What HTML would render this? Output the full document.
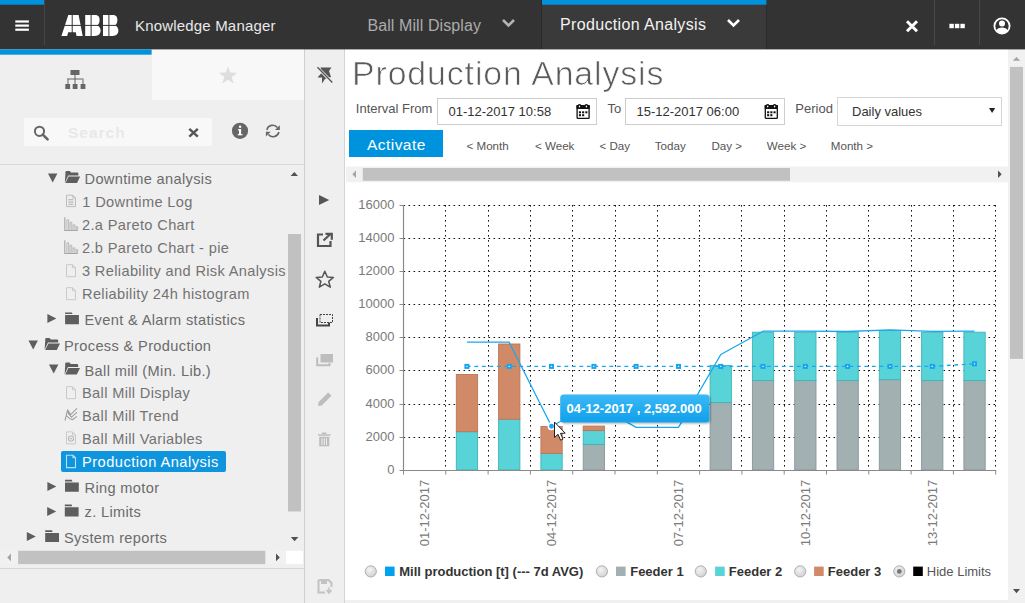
<!DOCTYPE html>
<html><head><meta charset="utf-8">
<style>
html,body{margin:0;padding:0}
body{width:1025px;height:603px;overflow:hidden;position:relative;background:#fff;font-family:"Liberation Sans",sans-serif}
.a{position:absolute}
.t{position:absolute;white-space:nowrap;line-height:1}
svg{position:absolute;overflow:visible}
</style></head><body>

<div id="left" class="a" style="left:0;top:49px;width:304px;height:554px;background:#efefef"></div>
<div class="a" style="left:152px;top:49px;width:152px;height:51px;background:#f8f8f8"></div>
<div class="a" style="left:304px;top:49px;width:1px;height:554px;background:#cfcfcf"></div>
<div class="a" style="left:305px;top:49px;width:39px;height:554px;background:#efefef"></div>
<div class="a" style="left:344px;top:49px;width:1px;height:554px;background:#d4d4d4"></div>
<div class="a" style="left:1008px;top:49px;width:17px;height:554px;background:#f1f1f1"></div>
<!-- HEADER -->
<svg style="left:0;top:0" width="1025" height="56"><rect x="0" y="0" width="1025" height="49.4" fill="#333"/><rect x="0" y="0" width="44.5" height="4.7" fill="#0093dd"/></svg>
<div class="a" style="left:44px;top:0;width:1px;height:45px;background:#454545"></div>
<svg style="left:0;top:0" width="44" height="49"><g fill="#fff"><rect x="15.3" y="20.4" width="13.6" height="2.2"/><rect x="15.3" y="24.5" width="13.6" height="2.2"/><rect x="15.3" y="28.6" width="13.6" height="2.2"/></g></svg>
<!-- ABB logo -->
<svg style="left:0;top:0" width="130" height="49">
  <g fill="#fff">
    <path d="M68.3 15 L78.6 15 L82.7 36 L76.5 36 L75.8 32.3 L68.2 32.3 L67.2 36 L61.4 36 Z"/>
    <path d="M85.2 15 L95 15 C98.8 15 99.6 17.6 99.6 20 C99.6 22.8 98.4 24.6 97.4 25.4 C99.4 26.2 100.6 28.2 100.6 30.6 C100.6 34.2 98.2 36 94.8 36 L85.2 36 Z"/>
    <path d="M103 15 L112.8 15 C116.6 15 117.4 17.6 117.4 20 C117.4 22.8 116.2 24.6 115.2 25.4 C117.2 26.2 118.4 28.2 118.4 30.6 C118.4 34.2 116 36 112.6 36 L103 36 Z"/>
  </g>
  <g fill="#333">
    <rect x="60" y="24.9" width="60" height="1"/>
    <rect x="71.7" y="14" width="1" height="23"/>
    <rect x="90.6" y="14" width="1" height="23"/>
    <rect x="108.4" y="14" width="1" height="23"/>
  </g>
</svg>
<div class="t" style="left:135px;top:18.4px;font-size:15px;color:#e8e8e8;letter-spacing:0.18px">Knowledge Manager</div>
<div class="t" style="left:367.4px;top:17.6px;font-size:16px;color:#ababab;letter-spacing:0.1px">Ball Mill Display</div>
<svg style="left:500px;top:17px" width="18" height="12"><path d="M3 3 L8.5 8.5 L14 3" fill="none" stroke="#b5b5b5" stroke-width="2.6"/></svg>
<div class="a" style="left:541px;top:0;width:226px;height:49px;background:#3a3a3a;border-left:1px solid #2a2a2a;border-right:1px solid #2a2a2a;box-sizing:border-box"></div>
<svg style="left:0;top:0" width="1025" height="10"><rect x="542" y="0" width="224.5" height="4.7" fill="#0093dd"/></svg>
<div class="t" style="left:560px;top:16.5px;font-size:16px;color:#f2f2f2;letter-spacing:0.35px">Production Analysis</div>
<svg style="left:725px;top:17px" width="18" height="12"><path d="M3 3 L8.5 8.5 L14 3" fill="none" stroke="#fff" stroke-width="2.6"/></svg>
<svg style="left:900px;top:14px" width="24" height="24"><path d="M7 7.2 L17 17.2 M17 7.2 L7 17.2" stroke="#fff" stroke-width="3"/></svg>
<div class="a" style="left:934px;top:0;width:1px;height:45px;background:#474747"></div>
<div class="a" style="left:979px;top:0;width:1px;height:45px;background:#474747"></div>
<svg style="left:0;top:0" width="1025" height="49"><g fill="#fff"><rect x="949.4" y="23.8" width="4.4" height="4.4"/><rect x="954.9" y="23.8" width="4.4" height="4.4"/><rect x="960.4" y="23.8" width="4.4" height="4.4"/></g></svg>
<svg style="left:990px;top:14px" width="24" height="24">
  <circle cx="12" cy="12" r="7.6" fill="none" stroke="#fff" stroke-width="1.8"/>
  <circle cx="12" cy="9.4" r="3" fill="#fff"/>
  <path d="M6.2 16.8 C7.5 14.2 9.5 13.6 12 13.6 C14.5 13.6 16.5 14.2 17.8 16.8 C16.4 18.6 14.3 19.6 12 19.6 C9.7 19.6 7.6 18.6 6.2 16.8 Z" fill="#fff"/>
</svg>

<!-- LEFT PANEL -->
<svg style="left:0;top:0" width="304" height="60"><rect x="0" y="49.4" width="151.6" height="5.3" fill="#0093dd"/></svg>


<!-- tab icons -->
<svg style="left:0;top:0" width="304" height="100">
  <g fill="#666">
    <rect x="70.5" y="70" width="9" height="5"/>
    <rect x="74.5" y="75" width="1" height="4"/>
    <rect x="67.5" y="78.5" width="15" height="1"/>
    <rect x="67.5" y="78.5" width="1" height="6"/>
    <rect x="74.5" y="78.5" width="1" height="6"/>
    <rect x="82.5" y="78.5" width="1" height="6"/>
    <rect x="65.3" y="84" width="4.8" height="5"/>
    <rect x="72.7" y="84" width="4.8" height="5"/>
    <rect x="80.6" y="84" width="4.8" height="5"/>
  </g>
  <path d="M228 66.6 L230.3 72.4 L237.2 72.8 L231.8 76.9 L233.7 83.6 L228 79.7 L222.3 83.6 L224.2 76.9 L218.8 72.8 L225.7 72.4 Z" fill="#dedede"/>
</svg>
<!-- search box -->
<div class="a" style="left:24px;top:118px;width:188px;height:28px;background:#f8f8f8"></div>
<svg style="left:0;top:100px" width="304" height="60">
  <circle cx="39.5" cy="31.3" r="4.6" fill="none" stroke="#666" stroke-width="2"/>
  <path d="M42.8 34.6 L47.6 39.4" stroke="#666" stroke-width="2.6" stroke-linecap="round"/>
  <path d="M189.3 28.8 L197.8 36.6 M197.8 28.8 L189.3 36.6" stroke="#555" stroke-width="2.4"/>
  <circle cx="240" cy="30.8" r="8.1" fill="#666"/>
  <rect x="239" y="29.2" width="2.1" height="5.8" fill="#fff"/>
  <rect x="237.9" y="29.2" width="3.2" height="1.2" fill="#fff"/>
  <rect x="237.7" y="34.1" width="4.8" height="1.2" fill="#fff"/>
  <circle cx="240.1" cy="26.8" r="1.2" fill="#fff"/>
  <path d="M266.9 30 A5.9 5.9 0 0 1 277.4 27.6" fill="none" stroke="#666" stroke-width="1.6"/>
  <path d="M278.9 32 A5.9 5.9 0 0 1 268.5 34.4" fill="none" stroke="#666" stroke-width="1.6"/>
  <path d="M279.8 25.2 L279.8 30 L275 30 Z" fill="#666"/>
  <path d="M265.9 36.6 L265.9 31.8 L270.7 31.8 Z" fill="#666"/>
</svg>
<div class="t" style="left:68px;top:124.6px;font-size:15.5px;font-weight:bold;color:#e8e8e8;letter-spacing:1px">Search</div>
<div class="a" style="left:0;top:164px;width:304px;height:1px;background:#d8d8d8"></div>

<!-- tree -->
<div id="tree" style="position:absolute;left:0;top:0;width:304px;height:550px;overflow:hidden;color:#6b6b6b;font-size:14.6px;letter-spacing:0.35px">
  <div class="t" style="left:84.5px;top:172.15px">Downtime analysis</div>
  <div class="t" style="left:82.3px;top:195.25px;color:#737373">1 Downtime Log</div>
  <div class="t" style="left:82px;top:218.25px;color:#737373">2.a Pareto Chart</div>
  <div class="t" style="left:82px;top:241.25px;color:#737373">2.b Pareto Chart - pie</div>
  <div class="t" style="left:82px;top:264.25px;color:#737373">3 Reliability and Risk Analysis</div>
  <div class="t" style="left:82px;top:287.25px;color:#737373">Reliability 24h histogram</div>
  <div class="t" style="left:84.5px;top:313.15px">Event &amp; Alarm statistics</div>
  <div class="t" style="left:64px;top:338.65px">Process &amp; Production</div>
  <div class="t" style="left:84.5px;top:363.85px">Ball mill (Min. Lib.)</div>
  <div class="t" style="left:82px;top:386.35px;color:#737373">Ball Mill Display</div>
  <div class="t" style="left:82px;top:408.95px;color:#737373">Ball Mill Trend</div>
  <div class="t" style="left:82px;top:432.05px;color:#737373">Ball Mill Variables</div>
  <div class="a" style="left:61px;top:451px;width:165px;height:21px;background:#0f95dd;border-radius:2px"></div>
  <div class="t" style="left:82px;top:455.05px;color:#fff;letter-spacing:0.5px">Production Analysis</div>
  <div class="t" style="left:84.5px;top:480.65px">Ring motor</div>
  <div class="t" style="left:84.5px;top:505.15px">z. Limits</div>
  <div class="t" style="left:64px;top:531.15px">System reports</div>
  <svg style="left:0;top:0" width="304" height="550">
    <defs>
      <path id="fo" d="M0.6 3.2 L0.6 1.2 Q0.6 0 1.8 0 L5 0 L6.2 1.6 L12.4 1.6 Q13.6 1.6 13.6 2.8 L13.6 4.6 L3.4 4.6 L0 11.8 Z M3.8 5.6 L15.4 5.6 L12.2 12 L0.6 12 Z"/>
      <path id="fc" d="M0.4 0 L7.2 0 L7.8 1.7 L0.4 1.7 Z M0.4 2.7 L14.2 2.7 L14.2 11.9 L0.4 11.9 Z"/>
      <path id="tr" d="M0 0 L9.4 0 L4.7 9 Z"/>
      <path id="tl" d="M0 0 L9 4.5 L0 9 Z"/>
      <path id="doc" d="M0.5 0.5 L6.5 0.5 L9.5 3.5 L9.5 12.5 L0.5 12.5 Z M6.5 0.5 L6.5 3.5 L9.5 3.5" fill="none" stroke="#c9c9c9" stroke-width="1"/>
    </defs>
    <g fill="#5e5e5e">
      <use href="#tr" x="48" y="173.5"/>
      <use href="#fo" x="64.8" y="171"/>
      <use href="#tl" x="47.4" y="314"/>
      <use href="#fc" x="64.7" y="312.4"/>
      <use href="#tr" x="28.5" y="340.5"/>
      <use href="#fo" x="44.6" y="338"/>
      <use href="#tr" x="49" y="364.5"/>
      <use href="#fo" x="64.6" y="362.5"/>
      <use href="#tl" x="47.4" y="482"/>
      <use href="#fc" x="64.6" y="479.8"/>
      <use href="#tl" x="47.2" y="507"/>
      <use href="#fc" x="64.4" y="504.6"/>
      <use href="#tl" x="26.8" y="532"/>
      <use href="#fc" x="44.8" y="530.2"/>
    </g>
    <!-- item icons -->
    <g>
      <path d="M66.5 195.2 L72.8 195.2 L75.5 197.9 L75.5 206.6 L66.5 206.6 Z M72.8 195.2 V197.9 H75.5" fill="none" stroke="#bcbcbc"/>
      <path d="M68.3 199.8 H73.5 M68.3 202 H73.5 M68.3 204.2 H73.5" stroke="#b0b0b0" stroke-width="1.1"/>
      <path d="M64.8 217.3 V230.5 H77.8" fill="none" stroke="#a5a5a5" stroke-width="1.1"/><path d="M66.9 229.9 V219.9 H68.7 V229.9 M70 229.9 V222.3 H71.8 V229.9 M73.1 229.9 V224.9 H74.9 V229.9 M76.2 229.9 V226.70000000000002 H77.6 V229.9" fill="none" stroke="#b0b0b0" stroke-width="0.9"/>
      <path d="M64.8 240.3 V253.5 H77.8" fill="none" stroke="#a5a5a5" stroke-width="1.1"/><path d="M66.9 252.9 V242.9 H68.7 V252.9 M70 252.9 V245.3 H71.8 V252.9 M73.1 252.9 V247.9 H74.9 V252.9 M76.2 252.9 V249.70000000000002 H77.6 V252.9" fill="none" stroke="#b0b0b0" stroke-width="0.9"/>
      <use href="#doc" x="66" y="264.2"/>
      <use href="#doc" x="66" y="287.2"/>
      <use href="#doc" x="66" y="386.2"/>
      <path d="M65 420.5 L67.6 409.8 L70.6 414.6 L77 408.4 M67.6 409.8 L68.6 413.8 L71.6 417.2 L77 412.2 M66.2 415.6 L69.6 418.4 L72.4 419.8 L77 416.4" fill="none" stroke="#a0a0a0" stroke-width="1.1" stroke-linejoin="round"/>
      <use href="#doc" x="66" y="431.4"/>
      <circle cx="71" cy="438.6" r="2.6" fill="none" stroke="#b8b8b8" stroke-width="1.1"/><circle cx="71" cy="438.6" r="0.9" fill="#b8b8b8"/>
      <path d="M66.5 455.2 L73 455.2 L75.5 457.7 L75.5 467.6 L66.5 467.6 Z M73 455.2 V457.7 H75.5" fill="none" stroke="#b5e0f6" stroke-width="1.1"/>
    </g>
    <!-- v scrollbar -->
    <path d="M290.6 176.1 L294.3 172 L298 176.1 Z" fill="#505050"/>
    <rect x="288" y="234" width="13" height="277.5" fill="#c1c1c1"/>
    <path d="M290.8 537 L294.6 541.2 L298.4 537 Z" fill="#505050"/>
  </svg>
</div>
<!-- h scrollbar -->
<svg style="left:0;top:0" width="304" height="603">
  <rect x="0" y="550.8" width="286" height="13.3" fill="#f1f1f1"/>
  <rect x="18.1" y="550.8" width="247.2" height="13.3" fill="#c1c1c1"/>
  <path d="M11 553.6 L7.2 557.4 L11 561.2 Z" fill="#a3a3a3"/>
  <path d="M276 553.6 L279.8 557.4 L276 561.2 Z" fill="#505050"/>
  <rect x="286" y="550.8" width="17" height="13.3" fill="#fff"/>
  <rect x="0" y="568" width="304" height="1" fill="#d6d6d6"/>
</svg>


<!-- TOOLBAR -->
<svg style="left:300px;top:0" width="45" height="603">
  <!-- unpin -->
  <g fill="#555">
    <path d="M20.5 67.5 L31.5 67.5 L29 71 L31 77 L25 79 L22 83.5 L22 77.5 L17.5 77.5 L21.5 73 Z"/>
  </g>
  <path d="M17 67 L32.6 82.8" stroke="#efefef" stroke-width="3"/>
  <path d="M17.5 67.3 L32.3 82.5" stroke="#555" stroke-width="1.3"/>
  <!-- play -->
  <path d="M19 195 L29.2 200 L19 205 Z" fill="#555"/>
  <!-- external -->
  <path d="M23 234.5 H18 V246 H30.5 V241" fill="none" stroke="#555" stroke-width="2.2"/>
  <path d="M23.5 240.5 L31 233.5 M25.5 233.8 H31.8 V239.8" fill="none" stroke="#555" stroke-width="2.2"/>
  <!-- star outline -->
  <path d="M24.8 271.2 L27.3 277 L33.4 277.4 L28.7 281.3 L30.3 287.2 L24.8 283.9 L19.3 287.2 L20.9 281.3 L16.2 277.4 L22.3 277 Z" fill="none" stroke="#555" stroke-width="1.5" stroke-linejoin="round"/>
  <!-- select -->
  <rect x="20" y="314.5" width="12.5" height="8" fill="none" stroke="#444" stroke-width="1" stroke-dasharray="2,1"/>
  <path d="M17 318 V325.5 H29 V322.5" fill="none" stroke="#444" stroke-width="2"/>
  <!-- copy disabled -->
  <rect x="20.5" y="354" width="12.5" height="8.5" fill="#bdbdbd"/>
  <path d="M17.2 357.5 V365.2 H29.5 V363" fill="none" stroke="#bdbdbd" stroke-width="2"/>
  <!-- pencil -->
  <path d="M18 406 L18.6 402 L28.2 392.6 L31.4 395.8 L21.8 405.4 Z" fill="#bdbdbd"/>
  <!-- trash -->
  <path d="M18 435 H30.5 M22 433.2 H26.5" stroke="#bdbdbd" stroke-width="1.6"/>
  <path d="M19.2 436.8 H29.3 V446.3 H19.2 Z" fill="#bdbdbd"/>
  <path d="M22 438.2 V445 M24.25 438.2 V445 M26.5 438.2 V445" stroke="#efefef" stroke-width="1"/>
  <!-- save -->
  <path d="M18.5 580 H28.5 L31.5 583 V587 M18.5 580 V592.5 H25" fill="none" stroke="#c2c2c2" stroke-width="2"/>
  <rect x="21" y="580" width="6" height="4" fill="#c2c2c2"/>
  <path d="M29 587.5 V592.5 M26.5 590 L29 593 L31.5 590" fill="none" stroke="#c2c2c2" stroke-width="1.6"/>
</svg>

<!-- MAIN -->
<div class="a" style="left:345px;top:600px;width:663px;height:3px;background:#f0f0f0"></div>
<svg style="left:1000px;top:0" width="25" height="603">
  <path d="M12.8 60.7 L16.5 57 L20.2 60.7 Z" fill="#a3a3a3"/>
  <rect x="10" y="66.9" width="13" height="292" fill="#c1c1c1"/>
  <path d="M13 589 L16.5 593.2 L20 589 Z" fill="#505050"/>
</svg>

<div class="t" style="left:351.8px;top:57.6px;font-size:32.5px;color:#5a5a5a;letter-spacing:0.88px;-webkit-text-stroke:0.7px #fff;transform:scaleX(1.04);transform-origin:0 0">Production Analysis</div>
<div class="t" style="left:355.8px;top:101.8px;font-size:13px;color:#555">Interval From</div>
<div class="a" style="left:437px;top:98px;width:160px;height:27px;border:1px solid #cdcdcd;box-sizing:border-box;background:#fff"></div>
<div class="t" style="left:448.5px;top:105px;font-size:13px;color:#333">01-12-2017 10:58</div>
<div class="t" style="left:607.5px;top:101.8px;font-size:13px;color:#555">To</div>
<div class="a" style="left:625px;top:98px;width:160px;height:27px;border:1px solid #cdcdcd;box-sizing:border-box;background:#fff"></div>
<div class="t" style="left:636.5px;top:105px;font-size:13px;color:#333">15-12-2017 06:00</div>
<svg style="left:0;top:0" width="1025" height="200">
  <defs><g id="cal">
    <rect x="0.9" y="1.6" width="12" height="12.7" rx="0.6" fill="none" stroke="#111" stroke-width="1.3"/>
    <rect x="0.3" y="1" width="13.2" height="3.9" rx="0.6" fill="#111"/>
    <circle cx="3.3" cy="2" r="1.9" fill="#111"/><circle cx="10.2" cy="2" r="1.9" fill="#111"/>
    <ellipse cx="3.3" cy="2.4" rx="0.7" ry="1" fill="#fff"/><ellipse cx="10.2" cy="2.4" rx="0.7" ry="1" fill="#fff"/>
    <g fill="#111"><rect x="2.7" y="7.3" width="2.1" height="2"/><rect x="5.9" y="7.3" width="2.1" height="2"/><rect x="9.1" y="7.3" width="2.1" height="2"/>
    <rect x="2.7" y="10.2" width="2.1" height="2"/><rect x="5.9" y="10.2" width="2.1" height="2"/></g>
  </g></defs>
  <use href="#cal" x="576.2" y="104"/>
  <use href="#cal" x="764.4" y="104"/>
</svg>
<div class="t" style="left:795.3px;top:101.8px;font-size:13px;color:#555">Period</div>
<div class="a" style="left:837px;top:97px;width:165px;height:28.5px;border:1px solid #d6d6d6;box-sizing:border-box;background:#fff"></div>
<div class="t" style="left:852px;top:104.6px;font-size:13px;color:#333">Daily values</div>
<svg style="left:985px;top:104px" width="14" height="12"><path d="M4 4 L10.2 4 L7.1 9 Z" fill="#222"/></svg>

<div class="a" style="left:349px;top:130px;width:94px;height:27px;background:#0093dd"></div>
<div class="t" style="left:367px;top:136.8px;font-size:15.5px;color:#fff;letter-spacing:0.45px">Activate</div>
<div style="position:absolute;left:0;top:140px;font-size:11.6px;color:#555;line-height:1;white-space:nowrap">
  <span class="t" style="left:466.5px">&lt; Month</span>
  <span class="t" style="left:535px">&lt; Week</span>
  <span class="t" style="left:599.5px">&lt; Day</span>
  <span class="t" style="left:654.8px">Today</span>
  <span class="t" style="left:711.5px">Day &gt;</span>
  <span class="t" style="left:766.8px">Week &gt;</span>
  <span class="t" style="left:830.8px">Month &gt;</span>
</div>
<svg style="left:0;top:0" width="1025" height="200">
  <rect x="346" y="166.6" width="662" height="15.7" fill="#f1f1f1"/>
  <rect x="362.8" y="168" width="427.2" height="12.8" fill="#c1c1c1"/>
  <path d="M356 170.6 L352.3 174.3 L356 178 Z" fill="#a3a3a3"/>
  <path d="M998 170.6 L1001.7 174.3 L998 178 Z" fill="#505050"/>
</svg>

<!-- CHART -->
<svg style="left:0;top:0" width="1025" height="603">
<text x="394.5" y="474.2" text-anchor="end" font-size="13" fill="#7a7a7a">0</text>
<text x="394.5" y="441.2" text-anchor="end" font-size="13" fill="#7a7a7a">2000</text>
<text x="394.5" y="408.2" text-anchor="end" font-size="13" fill="#7a7a7a">4000</text>
<text x="394.5" y="374.2" text-anchor="end" font-size="13" fill="#7a7a7a">6000</text>
<text x="394.5" y="341.2" text-anchor="end" font-size="13" fill="#7a7a7a">8000</text>
<text x="394.5" y="308.2" text-anchor="end" font-size="13" fill="#7a7a7a">10000</text>
<text x="394.5" y="275.2" text-anchor="end" font-size="13" fill="#7a7a7a">12000</text>
<text x="394.5" y="242.2" text-anchor="end" font-size="13" fill="#7a7a7a">14000</text>
<text x="394.5" y="209.2" text-anchor="end" font-size="13" fill="#7a7a7a">16000</text>
<path d="M403.5 437.5 H995.7 M403.5 404.5 H995.7 M403.5 370.5 H995.7 M403.5 337.5 H995.7 M403.5 304.5 H995.7 M403.5 271.5 H995.7 M403.5 238.5 H995.7 M403.5 205.5 H995.7" stroke="#111" stroke-width="1" stroke-dasharray="1.6,3.4" fill="none"/>
<path d="M445.5 205 V470 M488.5 205 V470 M530.5 205 V470 M572.5 205 V470 M615.5 205 V470 M657.5 205 V470 M699.5 205 V470 M741.5 205 V470 M784.5 205 V470 M826.5 205 V470 M868.5 205 V470 M911.5 205 V470 M953.5 205 V470 M995.5 205 V470" stroke="#111" stroke-width="1" stroke-dasharray="1.6,3.4" fill="none"/>
<rect x="456.3" y="431.7" width="21.3" height="38.3" fill="#58d3d7" stroke="#3eb4b8" stroke-width="0.9"/>
<rect x="456.3" y="374.5" width="21.3" height="57.2" fill="#d18a68" stroke="#bd7556" stroke-width="0.9"/>
<rect x="498.6" y="419.2" width="21.3" height="50.8" fill="#58d3d7" stroke="#3eb4b8" stroke-width="0.9"/>
<rect x="498.6" y="344.0" width="21.3" height="75.2" fill="#d18a68" stroke="#bd7556" stroke-width="0.9"/>
<rect x="540.9" y="453.4" width="21.3" height="16.6" fill="#58d3d7" stroke="#3eb4b8" stroke-width="0.9"/>
<rect x="540.9" y="426.5" width="21.3" height="26.9" fill="#d18a68" stroke="#bd7556" stroke-width="0.9"/>
<rect x="583.2" y="444.4" width="21.3" height="25.6" fill="#a2b0b2" stroke="#87979a" stroke-width="0.9"/>
<rect x="583.2" y="430.6" width="21.3" height="13.8" fill="#58d3d7" stroke="#3eb4b8" stroke-width="0.9"/>
<rect x="583.2" y="426.1" width="21.3" height="4.5" fill="#d18a68" stroke="#bd7556" stroke-width="0.9"/>
<rect x="710.1" y="402.6" width="21.3" height="67.4" fill="#a2b0b2" stroke="#87979a" stroke-width="0.9"/>
<rect x="710.1" y="365.4" width="21.3" height="37.2" fill="#58d3d7" stroke="#3eb4b8" stroke-width="0.9"/>
<rect x="752.4" y="380.5" width="21.3" height="89.5" fill="#a2b0b2" stroke="#87979a" stroke-width="0.9"/>
<rect x="752.4" y="332.2" width="21.3" height="48.4" fill="#58d3d7" stroke="#3eb4b8" stroke-width="0.9"/>
<rect x="794.7" y="380.5" width="21.3" height="89.5" fill="#a2b0b2" stroke="#87979a" stroke-width="0.9"/>
<rect x="794.7" y="332.2" width="21.3" height="48.4" fill="#58d3d7" stroke="#3eb4b8" stroke-width="0.9"/>
<rect x="837.0" y="380.5" width="21.3" height="89.5" fill="#a2b0b2" stroke="#87979a" stroke-width="0.9"/>
<rect x="837.0" y="332.2" width="21.3" height="48.4" fill="#58d3d7" stroke="#3eb4b8" stroke-width="0.9"/>
<rect x="879.3" y="379.6" width="21.3" height="90.4" fill="#a2b0b2" stroke="#87979a" stroke-width="0.9"/>
<rect x="879.3" y="330.5" width="21.3" height="49.2" fill="#58d3d7" stroke="#3eb4b8" stroke-width="0.9"/>
<rect x="921.6" y="380.5" width="21.3" height="89.5" fill="#a2b0b2" stroke="#87979a" stroke-width="0.9"/>
<rect x="921.6" y="332.2" width="21.3" height="48.4" fill="#58d3d7" stroke="#3eb4b8" stroke-width="0.9"/>
<rect x="963.9" y="380.5" width="21.3" height="89.5" fill="#a2b0b2" stroke="#87979a" stroke-width="0.9"/>
<rect x="963.9" y="332.2" width="21.3" height="48.4" fill="#58d3d7" stroke="#3eb4b8" stroke-width="0.9"/>
<path d="M403.5 205 V470.5 M403 470.5 H996.2" stroke="#8a8a8a" stroke-width="1.2" fill="none"/>
<path d="M399.5 470.5 H403.5 M399.5 437.5 H403.5 M399.5 404.5 H403.5 M399.5 370.5 H403.5 M399.5 337.5 H403.5 M399.5 304.5 H403.5 M399.5 271.5 H403.5 M399.5 238.5 H403.5 M399.5 205.5 H403.5 M403.5 470.5 V474.5 M445.8 470.5 V474.5 M488.1 470.5 V474.5 M530.4 470.5 V474.5 M572.7 470.5 V474.5 M615.0 470.5 V474.5 M657.3 470.5 V474.5 M699.6 470.5 V474.5 M741.9 470.5 V474.5 M784.2 470.5 V474.5 M826.5 470.5 V474.5 M868.8 470.5 V474.5 M911.1 470.5 V474.5 M953.4 470.5 V474.5 M995.7 470.5 V474.5" stroke="#8a8a8a" stroke-width="1" fill="none"/>
<text transform="translate(429.4 479.8) rotate(-90)" text-anchor="end" font-size="13" fill="#7a7a7a">01-12-2017</text>
<text transform="translate(556.3 479.8) rotate(-90)" text-anchor="end" font-size="13" fill="#7a7a7a">04-12-2017</text>
<text transform="translate(683.2 479.8) rotate(-90)" text-anchor="end" font-size="13" fill="#7a7a7a">07-12-2017</text>
<text transform="translate(810.1 479.8) rotate(-90)" text-anchor="end" font-size="13" fill="#7a7a7a">10-12-2017</text>
<text transform="translate(937.0 479.8) rotate(-90)" text-anchor="end" font-size="13" fill="#7a7a7a">13-12-2017</text>
<path d="M466.9 366.4 L509.2 366.4 L551.5 366.4 L593.9 366.4 L636.1 366.4 L678.5 366.4 L720.8 366.4 L763.0 366.4 L805.3 366.4 L847.6 366.4 L890.0 366.4 L932.2 366.4 L974.5 363.8" stroke="#1aa6ee" stroke-width="1.4" stroke-dasharray="3.8,3.7" fill="none"/>
<rect x="464.4" y="363.9" width="5" height="5" fill="#14a4f0"/><rect x="466.3" y="365.8" width="1.2" height="1.2" fill="#fff"/>
<rect x="506.8" y="363.9" width="5" height="5" fill="#14a4f0"/><rect x="508.6" y="365.8" width="1.2" height="1.2" fill="#fff"/>
<rect x="549.0" y="363.9" width="5" height="5" fill="#14a4f0"/><rect x="550.9" y="365.8" width="1.2" height="1.2" fill="#fff"/>
<rect x="591.4" y="363.9" width="5" height="5" fill="#14a4f0"/><rect x="593.2" y="365.8" width="1.2" height="1.2" fill="#fff"/>
<rect x="633.6" y="363.9" width="5" height="5" fill="#14a4f0"/><rect x="635.5" y="365.8" width="1.2" height="1.2" fill="#fff"/>
<rect x="676.0" y="363.9" width="5" height="5" fill="#14a4f0"/><rect x="677.9" y="365.8" width="1.2" height="1.2" fill="#fff"/>
<rect x="718.2" y="363.9" width="5" height="5" fill="#14a4f0"/><rect x="720.1" y="365.8" width="1.2" height="1.2" fill="#fff"/>
<rect x="760.5" y="363.9" width="5" height="5" fill="#14a4f0"/><rect x="762.4" y="365.8" width="1.2" height="1.2" fill="#fff"/>
<rect x="802.8" y="363.9" width="5" height="5" fill="#14a4f0"/><rect x="804.7" y="365.8" width="1.2" height="1.2" fill="#fff"/>
<rect x="845.1" y="363.9" width="5" height="5" fill="#14a4f0"/><rect x="847.0" y="365.8" width="1.2" height="1.2" fill="#fff"/>
<rect x="887.5" y="363.9" width="5" height="5" fill="#14a4f0"/><rect x="889.4" y="365.8" width="1.2" height="1.2" fill="#fff"/>
<rect x="929.8" y="363.9" width="5" height="5" fill="#14a4f0"/><rect x="931.6" y="365.8" width="1.2" height="1.2" fill="#fff"/>
<rect x="972.0" y="361.3" width="5" height="5" fill="#14a4f0"/><rect x="973.9" y="363.2" width="1.2" height="1.2" fill="#fff"/>
<path d="M466.9 342.2 L509.2 342.2 L551.5 426.3 L593.9 403.3 L636.1 427.4 L678.5 427.4 L720.8 354.5 L763.0 331.2 L805.3 331.2 L847.6 331.5 L890.0 329.8 L932.2 331.4 L974.5 331.2" stroke="#1aa6ee" stroke-width="1.3" fill="none" stroke-linejoin="round"/>
<circle cx="551.5" cy="426.3" r="3.2" fill="#1aa6ee" stroke="#fff" stroke-width="1.5"/>
<defs><linearGradient id="tg" x1="0" y1="0" x2="0" y2="1"><stop offset="0" stop-color="#3bb9f6"/><stop offset="1" stop-color="#11a0ea"/></linearGradient><filter id="sh" x="-10%" y="-30%" width="120%" height="160%"><feGaussianBlur in="SourceAlpha" stdDeviation="1.2"/><feOffset dx="0.5" dy="1" result="b"/><feComponentTransfer><feFuncA type="linear" slope="0.35"/></feComponentTransfer><feMerge><feMergeNode/><feMergeNode in="SourceGraphic"/></feMerge></filter></defs>
<rect x="560.2" y="394.4" width="149.2" height="28" rx="3.5" fill="url(#tg)" filter="url(#sh)"/>
<text x="566.6" y="412.8" font-size="13" font-weight="bold" fill="#fff">04-12-2017 , 2,592.000</text>
<path d="M554.5 422 L554.5 437.5 L558 434.3 L560.6 440.2 L563 439.1 L560.5 433.4 L565.2 433.2 Z" fill="#fff" stroke="#222" stroke-width="1" stroke-linejoin="round"/>
<defs><radialGradient id="rg" cx="0.4" cy="0.35" r="0.7"><stop offset="0" stop-color="#f4f4f4"/><stop offset="1" stop-color="#cfcfcf"/></radialGradient></defs>
<circle cx="370.8" cy="571.4" r="5.6" fill="url(#rg)" stroke="#a8a8a8" stroke-width="0.9"/>
<rect x="385" y="566.6" width="9.6" height="9.4" fill="#00a2f0"/>
<text x="399.2" y="575.8" font-size="13" font-weight="bold" fill="#333">Mill production [t] (--- 7d AVG)</text>
<circle cx="601.9" cy="571.4" r="5.6" fill="url(#rg)" stroke="#a8a8a8" stroke-width="0.9"/>
<rect x="616" y="566.6" width="9.6" height="9.4" fill="#a2b0b2"/>
<text x="630.2" y="575.8" font-size="13" font-weight="bold" fill="#333">Feeder 1</text>
<circle cx="700.8" cy="571.4" r="5.6" fill="url(#rg)" stroke="#a8a8a8" stroke-width="0.9"/>
<rect x="715.1" y="566.6" width="9.6" height="9.4" fill="#58d3d7"/>
<text x="728.8" y="575.8" font-size="13" font-weight="bold" fill="#333">Feeder 2</text>
<circle cx="800.2" cy="571.4" r="5.6" fill="url(#rg)" stroke="#a8a8a8" stroke-width="0.9"/>
<rect x="814.1" y="566.6" width="9.6" height="9.4" fill="#d18a68"/>
<text x="827.8" y="575.8" font-size="13" font-weight="bold" fill="#333">Feeder 3</text>
<circle cx="899.3" cy="571.4" r="5.6" fill="url(#rg)" stroke="#a8a8a8" stroke-width="0.9"/>
<circle cx="899.3" cy="571.4" r="2.4" fill="#777"/>
<rect x="913.2" y="566.6" width="9.6" height="9.4" fill="#000"/>
<text x="926.8" y="575.8" font-size="13" font-weight="normal" fill="#555">Hide Limits</text>
</svg>
<!-- /CHART -->
</body></html>
